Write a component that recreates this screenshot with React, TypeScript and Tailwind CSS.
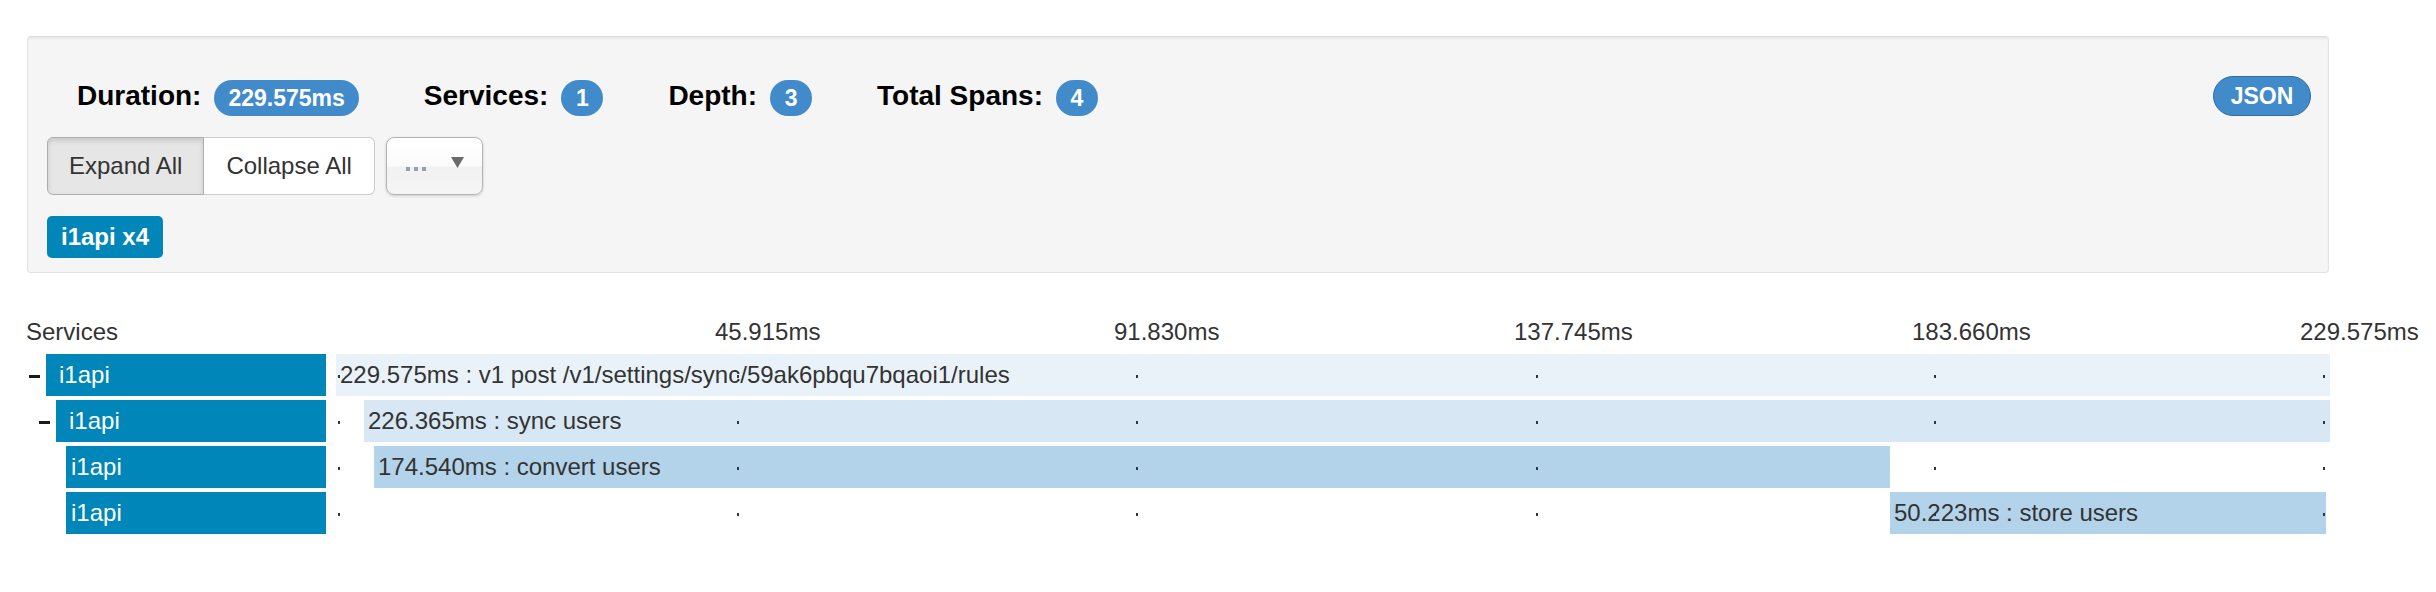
import React from "react";

type Row = {
  level: number;
  toggle: boolean;
  left: number;
  width: number;
  bg: string;
  text: string;
};

const rows: Row[] = [
  {
    level: 0,
    toggle: true,
    left: 0,
    width: 1994,
    bg: "bg-[#eaf2f9]",
    text: "229.575ms : v1 post /v1/settings/sync/59ak6pbqu7bqaoi1/rules",
  },
  { level: 1, toggle: true, left: 28, width: 1966, bg: "bg-[#d8e7f4]", text: "226.365ms : sync users" },
  { level: 2, toggle: false, left: 38, width: 1516, bg: "bg-[#b3d3ea]", text: "174.540ms : convert users" },
  { level: 2, toggle: false, left: 1554, width: 436, bg: "bg-[#b3d3ea]", text: "50.223ms : store users" },
];

const levelPad = ["pl-0", "pl-[10px]", "pl-[20px]"];

const ticks = [
  { label: "45.915ms", left: 379 },
  { label: "91.830ms", left: 778 },
  { label: "137.745ms", left: 1178 },
  { label: "183.660ms", left: 1576 },
  { label: "229.575ms", left: 1964 },
];

const dots = [2, 401, 800, 1200, 1598, 1987];

function Stat({ label, value, wide }: { label: string; value: string; wide?: boolean }) {
  return (
    <div className="flex items-center gap-[13px]">
      <span className="text-[28px] font-bold text-black leading-none">{label}</span>
      <span
        className={`flex h-[36px] items-center justify-center rounded-full bg-[#428bca] text-[23px] font-bold leading-none text-white mt-[4px] ${
          wide ? "px-[14px]" : "min-w-[42px] px-[5px]"
        }`}
      >
        {value}
      </span>
    </div>
  );
}

export default function App() {
  return (
    <div className="min-h-[592px] w-[2436px] bg-white font-['Liberation_Sans',Arial,sans-serif] text-[#333]">
      <div className="pl-[27px] pt-[36px]">
        <div className="w-[2302px] rounded-[4px] border border-[#e3e3e3] border-t-[#dcdcdc] bg-[#f5f5f5] pl-[19px] pr-[17px] pt-[39px] pb-[14px] shadow-[inset_0_2px_2px_rgba(0,0,0,0.05)]">
          <div className="flex h-[40px] items-center justify-between">
            <div className="flex items-center gap-[65px] pl-[30px]">
              <Stat label="Duration:" value="229.575ms" wide />
              <Stat label="Services:" value="1" />
              <Stat label="Depth:" value="3" />
              <Stat label="Total Spans:" value="4" />
            </div>
            <button className="flex h-[40px] w-[98px] items-center justify-center rounded-full border border-[#2e6da4] bg-[#428bca] text-[23px] font-bold leading-none text-white">
              JSON
            </button>
          </div>

          <div className="mt-[21px] flex items-center">
            <div className="flex">
              <button className="h-[58px] rounded-l-[6px] border border-[#adadad] bg-[#e6e6e6] px-[21px] text-[24px] leading-none text-[#333] shadow-[inset_0_3px_5px_rgba(0,0,0,0.125)]">
                Expand All
              </button>
              <button className="h-[58px] rounded-r-[6px] border border-l-0 border-[#ccc] bg-white px-[22px] text-[24px] leading-none text-[#333]">
                Collapse All
              </button>
            </div>
            <button className="relative ml-[11px] h-[58px] w-[97px] rounded-[8px] border border-[#b3b3b3] bg-[linear-gradient(to_bottom,#ffffff_0%,#fbfbfb_50%,#f1f1f1_52%,#f5f5f5_100%)] shadow-[0_1px_3px_rgba(0,0,0,0.18)]">
              <span className="absolute left-[19px] top-[29px] flex gap-[4px]">
                <span className="h-[4px] w-[4px] bg-[#959fad]" />
                <span className="h-[4px] w-[4px] bg-[#959fad]" />
                <span className="h-[4px] w-[4px] bg-[#959fad]" />
              </span>
              <svg className="absolute left-[64px] top-[19px]" width="13" height="11" viewBox="0 0 13 11">
                <path d="M0 0 L13 0 L6.5 11 Z" fill="#6a6a6a" />
              </svg>
            </button>
          </div>

          <div className="mt-[21px] flex">
            <span className="flex h-[42px] items-center rounded-[5px] bg-[#0086b8] px-[14px] text-[24px] font-bold leading-none text-white">
              i1api x4
            </span>
          </div>
        </div>
      </div>

      <div className="mt-[45px] pl-[26px]">
        <div className="mb-[9px] flex h-[27px] text-[24px] leading-[27px] text-[#333]">
          <div className="w-[310px]">Services</div>
          <div className="relative w-[1994px]">
            {ticks.map((t) => (
              <span key={t.label} className="absolute top-0 whitespace-nowrap" style={{ left: t.left }}>
                {t.label}
              </span>
            ))}
          </div>
        </div>

        {rows.map((r, i) => (
          <div key={i} className="mb-[4px] flex h-[42px]">
            <div className={`flex w-[300px] ${levelPad[r.level]}`}>
              <div className="flex w-[20px] items-center">
                {r.toggle && <div className="ml-[3px] mt-[2px] h-[3px] w-[11px] bg-[#1a1a1a]" />}
              </div>
              <div
                className={`flex flex-1 items-center bg-[#0086b8] text-[24px] leading-none text-white ${
                  r.toggle ? "pl-[13px]" : "pl-[5px]"
                }`}
              >
                i1api
              </div>
            </div>
            <div className="ml-[10px] relative h-[42px] w-[1994px]">
              <div className={`absolute top-0 h-[42px] ${r.bg}`} style={{ left: r.left, width: r.width }} />
              {dots.map((d) => (
                <span key={d} className="absolute top-[21px] h-[3px] w-[2px] bg-[#2b3550]" style={{ left: d }} />
              ))}
              <div
                className="absolute top-0 flex h-[42px] items-center whitespace-nowrap pl-[4px] text-[24px] leading-none text-[#333]"
                style={{ left: r.left }}
              >
                {r.text}
              </div>
            </div>
          </div>
        ))}
      </div>
    </div>
  );
}
